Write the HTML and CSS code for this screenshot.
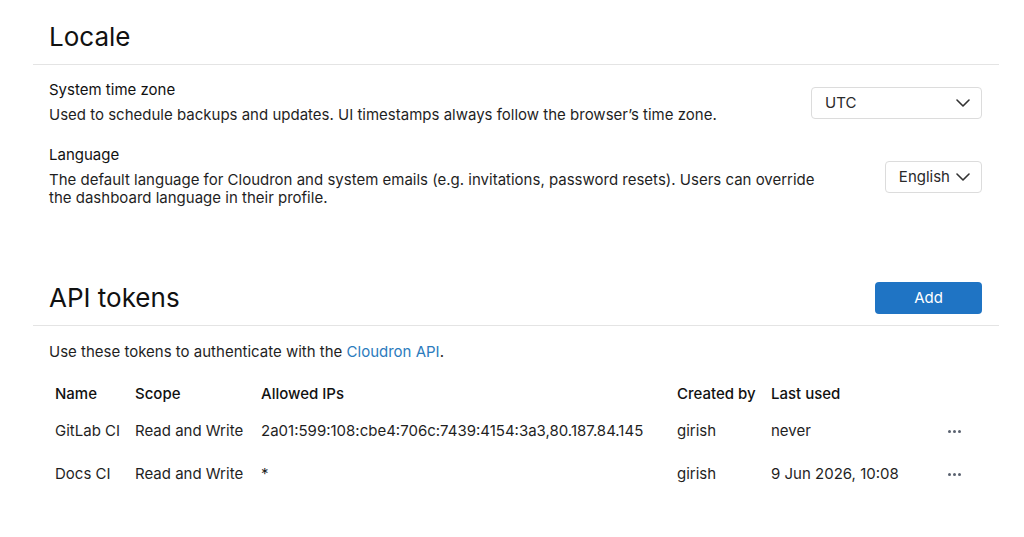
FILE: index.html
```html
<!DOCTYPE html>
<html lang="en">
<head>
<meta charset="utf-8">
<title>Settings</title>
<link rel="stylesheet" href="styles.css">
</head>
<body>
<div class="page">
  <section class="section">
    <div class="section-header">
      <h1 class="section-title">Locale</h1>
    </div>
    <div class="section-body">
      <div class="setting-row">
        <div class="setting-text">
          <div class="setting-label">System time zone</div>
          <div class="setting-desc">Used to schedule backups and updates. UI timestamps always follow the browser’s time zone.</div>
        </div>
        <button class="select select-wide"><span>UTC</span><svg class="chev" viewBox="0 0 14 8" width="14" height="8"><path d="M1 1l6 6 6-6" fill="none" stroke="#333" stroke-width="1.6" stroke-linecap="round" stroke-linejoin="round"/></svg></button>
      </div>
      <div class="setting-row setting-row-2">
        <div class="setting-text">
          <div class="setting-label">Language</div>
          <div class="setting-desc">The default language for Cloudron and system emails (e.g. invitations, password resets). Users can override the dashboard language in their profile.</div>
        </div>
        <button class="select"><span>English</span><svg class="chev" viewBox="0 0 14 8" width="14" height="8"><path d="M1 1l6 6 6-6" fill="none" stroke="#333" stroke-width="1.6" stroke-linecap="round" stroke-linejoin="round"/></svg></button>
      </div>
    </div>
  </section>

  <section class="section section-api">
    <div class="section-header">
      <h1 class="section-title">API tokens</h1>
      <button class="btn-primary">Add</button>
    </div>
    <div class="section-body">
      <p class="intro">Use these tokens to authenticate with the <a class="link" href="#">Cloudron API</a>.</p>
      <table class="tokens">
        <colgroup>
          <col class="c-name"><col class="c-scope"><col class="c-ips"><col class="c-created"><col class="c-last"><col class="c-act">
        </colgroup>
        <thead>
          <tr><th>Name</th><th>Scope</th><th>Allowed IPs</th><th>Created by</th><th>Last used</th><th></th></tr>
        </thead>
        <tbody>
          <tr><td>GitLab CI</td><td>Read and Write</td><td>2a01:599:108:cbe4:706c:7439:4154:3a3,80.187.84.145</td><td>girish</td><td>never</td><td class="act"><span class="dots"><i></i><i></i><i></i></span></td></tr>
          <tr><td>Docs CI</td><td>Read and Write</td><td>*</td><td>girish</td><td>9 Jun 2026, 10:08</td><td class="act"><span class="dots"><i></i><i></i><i></i></span></td></tr>
        </tbody>
      </table>
    </div>
  </section>
</div>
</body>
</html>
```
FILE: styles.css
```css
* { box-sizing: border-box; }
html, body { margin: 0; padding: 0; background: #fff; }
body {
  font-family: Inter, "Noto Sans", "Liberation Sans", sans-serif;
  font-size: 15px;
  line-height: 18px;
  color: #1f1f1f;
}
.page {
  margin-left: 33px;
  width: 966px;
}
.section-header {
  display: flex;
  align-items: center;
  justify-content: space-between;
  padding: 18px 17px 8px 16px;
  border-bottom: 1px solid #e4e4e4;
}
.section-title {
  margin: 0;
  font-size: 26px;
  line-height: 38px;
  font-weight: 400;
  color: #111;
}
.section-body {
  padding: 16px 17px 0 16px;
}
.setting-row {
  display: flex;
  align-items: center;
  justify-content: space-between;
  gap: 40px;
}
.setting-row-2 { margin-top: 22px; }
.setting-text { flex: 1; max-width: 780px; }
.setting-label { color: #111; }
.setting-desc { margin-top: 7px; }
.select {
  display: flex;
  align-items: center;
  justify-content: space-between;
  height: 32px;
  padding: 0 11px 0 13px;
  border: 1px solid #dcdcdc;
  border-radius: 4px;
  background: #fff;
  font: inherit;
  color: #2a2a2a;
  gap: 6px;
}
.select-wide { width: 171px; }
.chev { display: block; }

.section-api { margin-top: 54px; }
.btn-primary {
  width: 107px;
  height: 32px;
  border: none;
  border-radius: 4px;
  background: #1f74c4;
  color: #fff;
  font: inherit;
}
.section-api .section-body { padding-top: 17px; }
.intro { margin: 0; }
.link { color: #2c7bbd; text-decoration: none; }
.tokens {
  margin-top: 17px;
  width: 933px;
  border-collapse: collapse;
  table-layout: fixed;
}
.c-name { width: 80px; }
.c-scope { width: 126px; }
.c-ips { width: 416px; }
.c-created { width: 94px; }
.c-last { width: 161px; }
.c-act { width: 56px; }
.tokens th {
  text-align: left;
  font-weight: 500;
  height: 31px;
  padding: 0 6px;
  color: #111;
}
.tokens td {
  height: 43px;
  padding: 0 6px;
  white-space: nowrap;
}
.tokens td.act { text-align: center; }
.dots { display: inline-flex; gap: 2px; vertical-align: middle; }
.dots i { width: 3px; height: 3px; border-radius: 50%; background: #5a6270; display: block; }
```
